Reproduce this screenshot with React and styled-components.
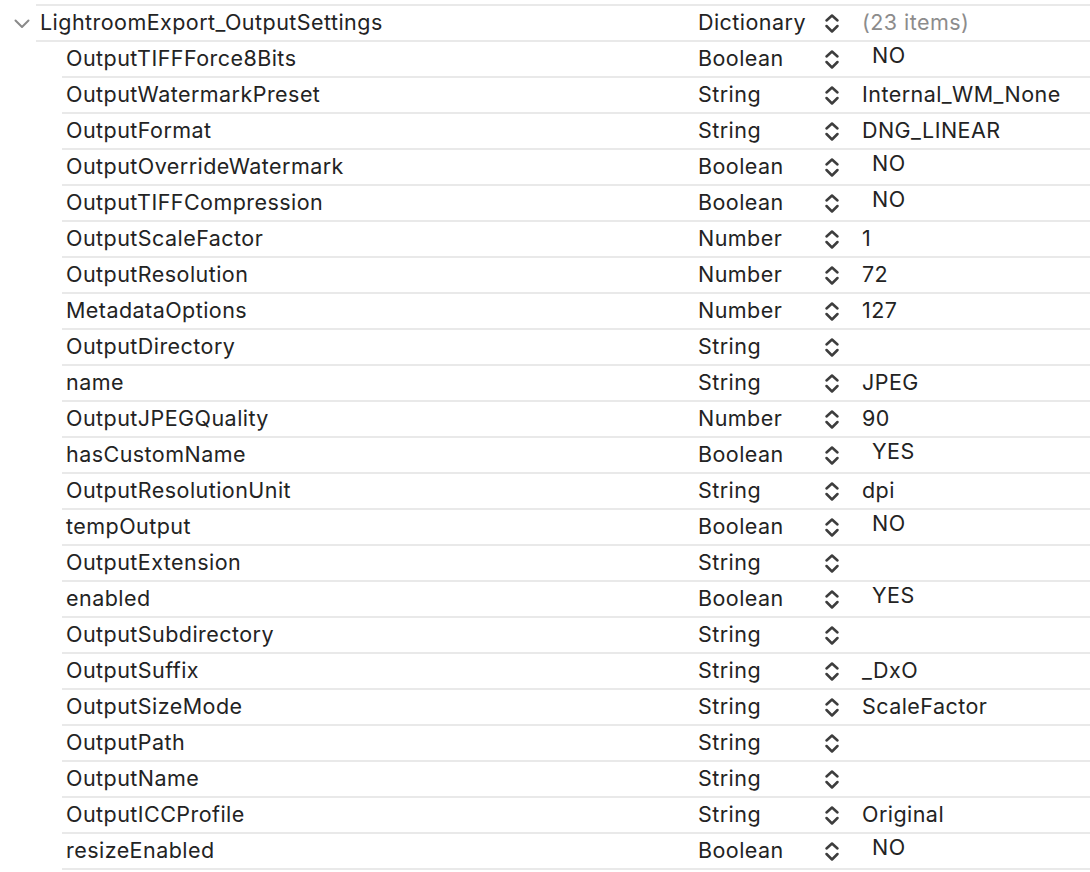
import React from "react";
import styled, { createGlobalStyle } from "styled-components";

const GlobalStyle = createGlobalStyle`
  html, body {
    margin: 0;
    padding: 0;
    background: #ffffff;
  }
  body {
    font-family: Inter, "Noto Sans", "Liberation Sans", sans-serif;
    color: #232323;
    -webkit-font-smoothing: antialiased;
  }
  * {
    box-sizing: border-box;
  }
`;

const items = [
  ["OutputTIFFForce8Bits", "Boolean", "NO"],
  ["OutputWatermarkPreset", "String", "Internal_WM_None"],
  ["OutputFormat", "String", "DNG_LINEAR"],
  ["OutputOverrideWatermark", "Boolean", "NO"],
  ["OutputTIFFCompression", "Boolean", "NO"],
  ["OutputScaleFactor", "Number", "1"],
  ["OutputResolution", "Number", "72"],
  ["MetadataOptions", "Number", "127"],
  ["OutputDirectory", "String", ""],
  ["name", "String", "JPEG"],
  ["OutputJPEGQuality", "Number", "90"],
  ["hasCustomName", "Boolean", "YES"],
  ["OutputResolutionUnit", "String", "dpi"],
  ["tempOutput", "Boolean", "NO"],
  ["OutputExtension", "String", ""],
  ["enabled", "Boolean", "YES"],
  ["OutputSubdirectory", "String", ""],
  ["OutputSuffix", "String", "_DxO"],
  ["OutputSizeMode", "String", "ScaleFactor"],
  ["OutputPath", "String", ""],
  ["OutputName", "String", ""],
  ["OutputICCProfile", "String", "Original"],
  ["resizeEnabled", "Boolean", "NO"],
];

const Outline = styled.div`
  padding-top: 4px;
  width: 1090px;
`;

const Row = styled.div`
  display: flex;
  height: ${(p) => (p.$root ? 38 : 36)}px;
`;

const Gutter = styled.div`
  width: ${(p) => p.$indent}px;
  flex: none;
  display: flex;
  align-items: center;
  padding-left: 14px;
  padding-top: 2px;
`;

const Cells = styled.div`
  flex: 1;
  min-width: 0;
  display: flex;
  align-items: center;
  padding-bottom: 2px;
  border-bottom: 2px solid #e9e9e9;
  border-top: ${(p) => (p.$first ? "2px solid #e9e9e9" : "none")};
  font-size: 21.5px;
  letter-spacing: 0.45px;
`;

const Key = styled.div`
  flex: 1;
  min-width: 0;
  padding-left: 4px;
  white-space: nowrap;
`;

const Type = styled.div`
  width: 124px;
  flex: none;
`;

const Stepper = styled.div`
  width: 40px;
  flex: none;
  display: flex;
  align-items: center;
  padding-left: 2px;
  padding-top: 3px;
`;

const Value = styled.div`
  flex: none;
  width: 228px;
  white-space: nowrap;
  color: ${(p) => (p.$muted ? "#8c8c8c" : "#232323")};
  padding-left: ${(p) => (p.$bool ? "10px" : "0")};
  position: relative;
  top: ${(p) => (p.$bool ? "-3px" : "0")};
`;

const Chevron = () => (
  <svg width="16" height="10" viewBox="0 0 16 10">
    <path
      d="M1.5 1.5 L8 8 L14.5 1.5"
      fill="none"
      stroke="#8a8a8a"
      strokeWidth="2"
      strokeLinecap="round"
      strokeLinejoin="round"
    />
  </svg>
);

const UpDown = () => (
  <svg width="16" height="21" viewBox="0 0 16 21">
    <path
      d="M2.5 7.5 L8 2.5 L13.5 7.5 M2.5 13 L8 18.5 L13.5 13"
      fill="none"
      stroke="#3d3d3d"
      strokeWidth="2.5"
      strokeLinecap="round"
      strokeLinejoin="round"
    />
  </svg>
);

export default function App() {
  return (
    <>
      <GlobalStyle />
      <Outline>
        <Row $root>
          <Gutter $indent={36}>
            <Chevron />
          </Gutter>
          <Cells $first>
            <Key>LightroomExport_OutputSettings</Key>
            <Type>Dictionary</Type>
            <Stepper>
              <UpDown />
            </Stepper>
            <Value $muted>(23 items)</Value>
          </Cells>
        </Row>
        {items.map(([key, type, value]) => (
          <Row key={key}>
            <Gutter $indent={62} />
            <Cells>
              <Key>{key}</Key>
              <Type>{type}</Type>
              <Stepper>
                <UpDown />
              </Stepper>
              <Value $bool={type === "Boolean"}>{value}</Value>
            </Cells>
          </Row>
        ))}
      </Outline>
    </>
  );
}
